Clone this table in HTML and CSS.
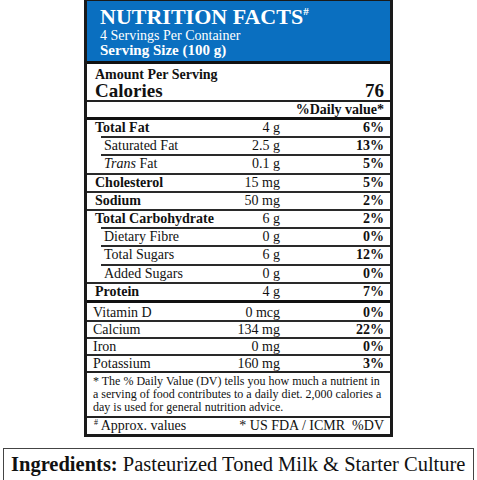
FILE: index.html
```html
<!DOCTYPE html>
<html lang="en">
<head>
    <meta charset="UTF-8">
    <meta name="viewport" content="width=device-width, initial-scale=1.0">
    <title>Nutrition Facts</title>
    <link rel="stylesheet" href="styles.css">
</head>
<body>
    <div class="label">
        <div class="header">
            <h1>NUTRITION FACTS<sup>#</sup></h1>
            <div class="servings">4 Servings Per Container</div>
            <div class="size">Serving Size (100 g)</div>
        </div>

        <div class="amount">
            <div class="aps">Amount Per Serving</div>
            <div class="calories"><span>Calories</span><span>76</span></div>
        </div>
        <div class="dv-head">%Daily value*</div>

        <div class="rows">
            <div class="row main first"><span>Total Fat</span><span class="qty">4 g</span><b>6%</b></div>
            <div class="row sub"><span>Saturated Fat</span><span class="qty">2.5 g</span><b>13%</b></div>
            <div class="row sub"><span><i>Trans</i> Fat</span><span class="qty">0.1 g</span><b>5%</b></div>
            <div class="row main"><span>Cholesterol</span><span class="qty">15 mg</span><b>5%</b></div>
            <div class="row main"><span>Sodium</span><span class="qty">50 mg</span><b>2%</b></div>
            <div class="row main"><span>Total Carbohydrate</span><span class="qty">6 g</span><b>2%</b></div>
            <div class="row sub"><span>Dietary Fibre</span><span class="qty">0 g</span><b>0%</b></div>
            <div class="row sub"><span>Total Sugars</span><span class="qty">6 g</span><b>12%</b></div>
            <div class="row sub"><span>Added Sugars</span><span class="qty">0 g</span><b>0%</b></div>
            <div class="row main"><span>Protein</span><span class="qty">4 g</span><b>7%</b></div>
        </div>

        <div class="rows minerals">
            <div class="row first"><span>Vitamin D</span><span class="qty">0 mcg</span><b>0%</b></div>
            <div class="row"><span>Calcium</span><span class="qty">134 mg</span><b>22%</b></div>
            <div class="row"><span>Iron</span><span class="qty">0 mg</span><b>0%</b></div>
            <div class="row"><span>Potassium</span><span class="qty">160 mg</span><b>3%</b></div>
        </div>

        <p class="note">* The % Daily Value (DV) tells you how much a nutrient in a serving of food contributes to a daily diet. 2,000 calories a day is used for general nutrition advice.</p>

        <div class="source">
            <span><sup>#</sup> Approx. values</span>
            <span>* US FDA / ICMR&nbsp; %DV</span>
        </div>
    </div>

    <div class="ingredients">
        <b>Ingredients:</b> Pasteurized Toned Milk &amp; Starter Culture
    </div>
</body>
</html>
```

FILE: styles.css
```css
body {
    margin: 0;
    padding: 0;
    background-color: #ffffff;
    font-family: "Liberation Serif", "Times New Roman", serif;
    color: #111111;
}

.label {
    width: 303px;
    margin-left: 84px;
    border: 3px solid #1a1a1a;
    border-top-width: 1px;
}

.header {
    background-color: #0a6fc0;
    color: #ffffff;
    padding: 4px 0 4px 13px;
    height: 52px;
    border-bottom: 3px solid #111111;
}

.header h1 {
    margin: 0;
    font-size: 22px;
    line-height: 24px;
    font-weight: bold;
}

.header h1 sup {
    font-size: 11px;
    vertical-align: 9px;
    line-height: 0;
}

.servings {
    font-size: 14px;
    line-height: 13px;
}

.size {
    font-size: 15px;
    line-height: 16px;
    font-weight: bold;
}

.amount {
    padding: 3px 6px 0 8px;
    border-bottom: 2px solid #222222;
}

.aps {
    font-size: 14px;
    font-weight: bold;
    line-height: 15px;
}

.calories {
    display: flex;
    justify-content: space-between;
    font-size: 19px;
    font-weight: bold;
    line-height: 18px;
}

.dv-head {
    text-align: right;
    font-size: 14px;
    font-weight: bold;
    line-height: 15px;
    padding-right: 6px;
    border-bottom: 3px solid #111111;
}

.rows {
    font-size: 14px;
}

.row {
    display: grid;
    grid-template-columns: 1fr 52px 104px;
    line-height: 16.2px;
    padding: 0 6px 0 8px;
    border-top: 2px solid #2a2a2a;
    white-space: nowrap;
}

.row.first {
    border-top: none;
}

.row.main span:first-child {
    font-weight: bold;
}

.row.sub {
    margin-left: 14px;
    padding-left: 3px;
}

.row .qty {
    text-align: right;
}

.row b {
    text-align: right;
}

.minerals {
    border-top: 3px solid #111111;
    border-bottom: 2px solid #222222;
    padding-top: 2px;
}

.minerals .row {
    padding-left: 6px;
    line-height: 15px;
}

.note {
    margin: 0;
    padding: 2px 5px 2px 6px;
    font-size: 12px;
    line-height: 13px;
    border-bottom: 2px solid #222222;
}

.source {
    display: flex;
    justify-content: space-between;
    padding: 0 6px 0 7px;
    font-size: 14px;
    line-height: 16px;
}

.source sup {
    font-size: 8px;
    vertical-align: 5px;
    line-height: 0;
}

.ingredients {
    margin: 11px 3px 0 3px;
    border: 1px solid #444444;
    padding: 3px 0 4px 7px;
    font-size: 20.5px;
    line-height: 25px;
    white-space: nowrap;
}
```
